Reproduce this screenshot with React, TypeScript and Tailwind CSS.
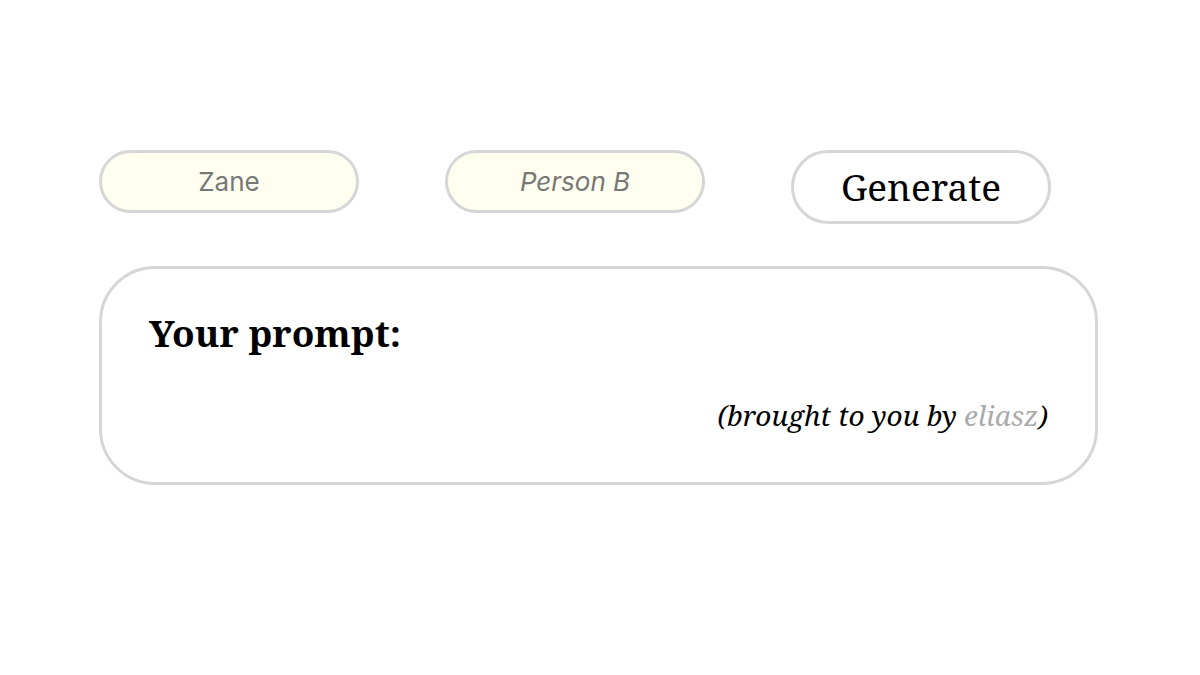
import { useState } from "react";

const serif = "font-['Noto_Serif','DejaVu_Serif','Liberation_Serif',serif]";

const App = () => {
  const [personA, setPersonA] = useState("");
  const [personB, setPersonB] = useState("");

  return (
    <div className="min-h-[675px] w-[1200px] bg-white">
      <div className="pl-[99px] pt-[150px]">
        {/* Inputs row */}
        <div className="flex items-start gap-[86px]">
          <input
            value={personA}
            onChange={(e) => setPersonA(e.target.value)}
            placeholder="Zane"
            className="h-[63px] w-[260px] rounded-full border-[3px] border-[#d6d6d6] bg-[#fffff0] text-center font-['Inter','Noto_Sans',sans-serif] text-[26px] text-[#777] placeholder:text-[#777] outline-none"
          />
          <input
            value={personB}
            onChange={(e) => setPersonB(e.target.value)}
            placeholder="Person B"
            className="h-[63px] w-[260px] rounded-full border-[3px] border-[#d6d6d6] bg-[#fffff0] text-center font-['Inter','Noto_Sans',sans-serif] text-[26px] italic text-[#777] placeholder:text-[#777] outline-none"
          />
          <button
            className={`h-[74px] w-[260px] rounded-full border-[3px] border-[#d6d6d6] bg-white text-[37px] text-black ${serif}`}
          >
            Generate
          </button>
        </div>

        {/* Prompt card */}
        <div className="mt-[42px] w-[999px] rounded-[56px] border-[3px] border-[#d6d6d6] px-[47px] pb-[46px] pt-[41px]">
          <h1 className={`text-[37px] font-bold leading-tight text-black ${serif}`}>Your prompt:</h1>
          <p className={`mt-[38px] text-right text-[28px] italic text-black ${serif}`}>
            (brought to you by <span className="text-[#aaa]">eliasz</span>)
          </p>
        </div>
      </div>
    </div>
  );
};

export default App;
